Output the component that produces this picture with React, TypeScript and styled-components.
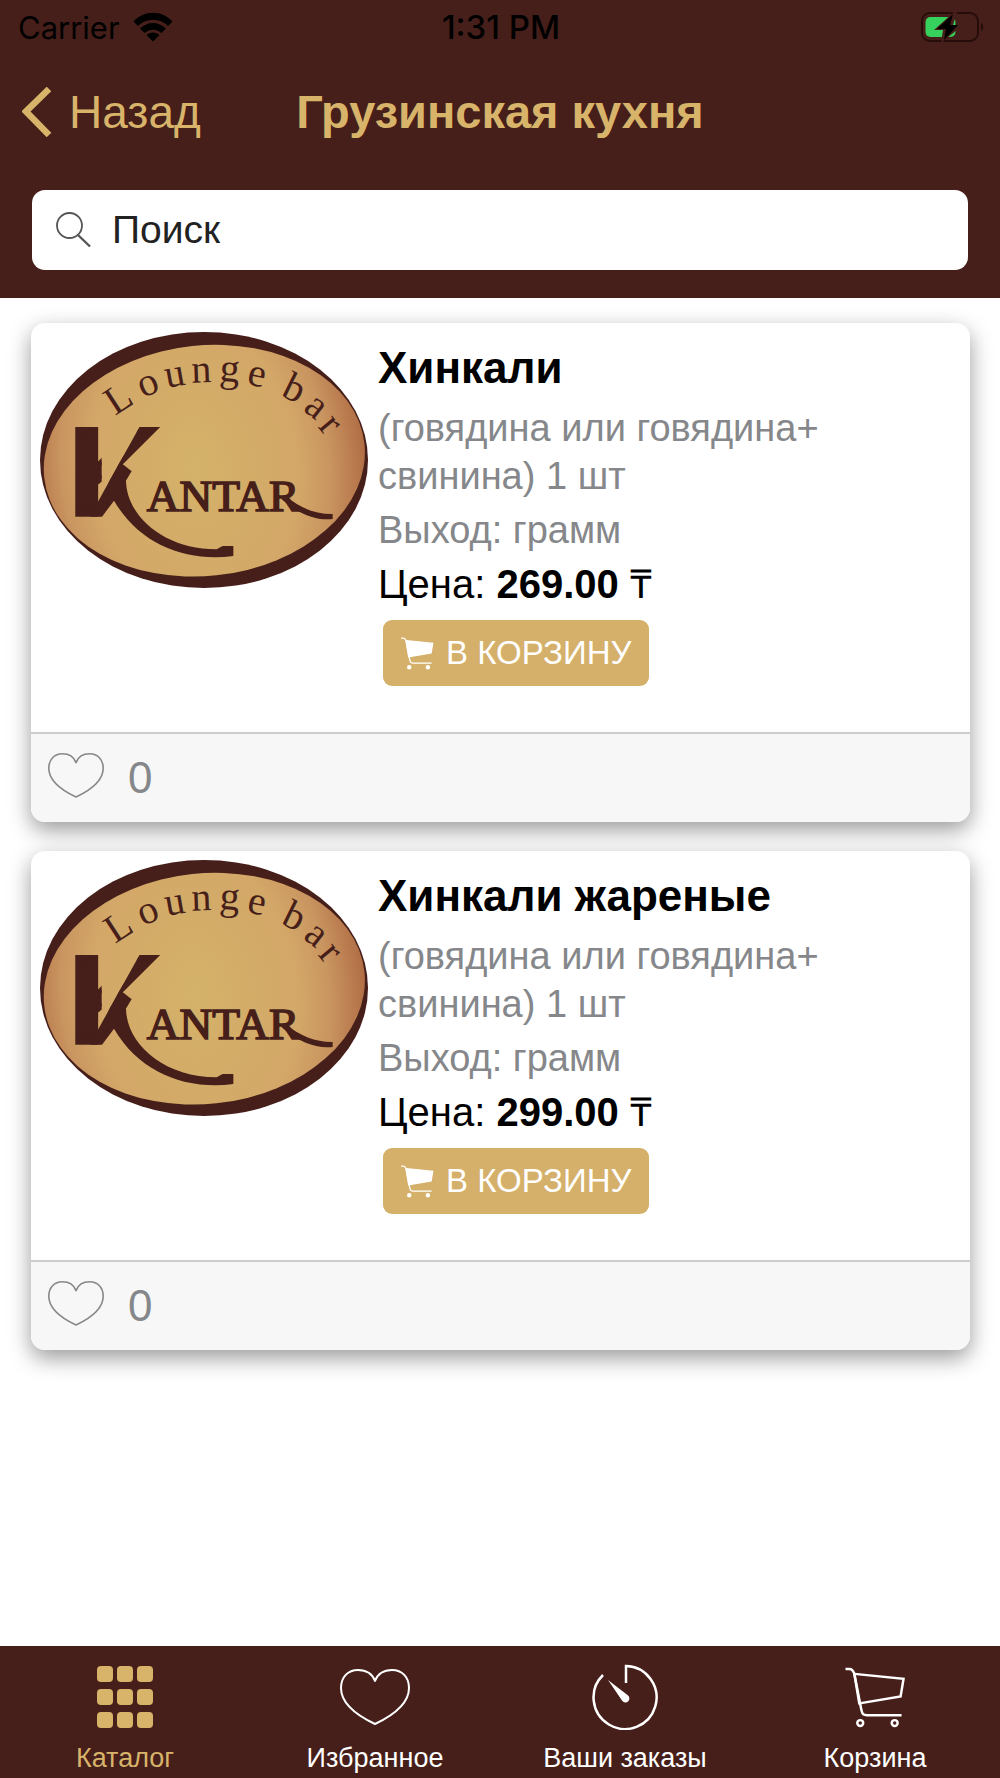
import React, { useState } from "react";
import styled, { createGlobalStyle } from "styled-components";

const brown = "#461f1a";
const gold = "#d8b36a";
const grey = "#85878a";

const GlobalStyle = createGlobalStyle`
  *, *::before, *::after { box-sizing: border-box; }
  body {
    margin: 0;
    background: #fff;
    font-family: "Liberation Sans", Arial, sans-serif;
  }
`;

const Screen = styled.div`
  display: flex;
  flex-direction: column;
  min-height: 100vh;
`;

const Header = styled.header`
  display: flex;
  flex-direction: column;
  padding-bottom: 28px;
  background: ${brown};
`;

const StatusBar = styled.div`
  display: grid;
  grid-template-columns: 1fr auto 1fr;
  align-items: center;
  height: 54px;
  padding: 0 16px 0 18px;
  font-family: Inter, sans-serif;
  font-size: 31px;
  color: #000;
`;

const Carrier = styled.div`
  display: flex;
  align-items: center;
  gap: 13px;
`;

const Clock = styled.time`
  font-size: 33px;
  font-weight: 500;
`;

const BatterySlot = styled.div`
  display: flex;
  justify-content: flex-end;
`;

const TitleBar = styled.div`
  display: grid;
  grid-template-columns: 1fr auto 1fr;
  align-items: center;
  height: 116px;
  padding: 0 22px;
  color: ${gold};
`;

const BackLink = styled.a`
  display: flex;
  align-items: center;
  gap: 14px;
  font-size: 46px;
  line-height: 52px;
  color: inherit;
  text-decoration: none;
`;

const PageTitle = styled.h1`
  margin: 0;
  font-size: 47px;
  line-height: 52px;
  font-weight: 700;
`;

const SearchBox = styled.label`
  display: flex;
  align-items: center;
  gap: 20px;
  height: 80px;
  margin: 20px 32px 0;
  padding: 0 24px;
  border-radius: 13px;
  background: #fff;
`;

const SearchInput = styled.input`
  flex: 1;
  min-width: 0;
  padding: 0;
  border: 0;
  outline: 0;
  background: transparent;
  font: 39px "Liberation Sans", Arial, sans-serif;
  color: #222;
  &::placeholder { color: #222; opacity: 1; }
`;

const List = styled.main`
  display: flex;
  flex: 1;
  flex-direction: column;
  gap: 29px;
  padding: 25px 30px 29px 31px;
`;

const Card = styled.article`
  border-radius: 14px;
  background: #fff;
  box-shadow: 0 8px 22px rgba(0, 0, 0, 0.4);
`;

const CardBody = styled.div`
  display: flex;
  align-items: flex-start;
  gap: 10px;
  min-height: 409px;
  padding: 9px;
`;

const Details = styled.div`
  display: flex;
  flex: 1;
  flex-direction: column;
  align-items: flex-start;
  padding-top: 12px;
`;

const DishName = styled.h2`
  margin: 0 0 12px;
  font-size: 44px;
  line-height: 48px;
  font-weight: 700;
  color: #000;
`;

const Note = styled.p`
  max-width: 480px;
  margin: 0 0 6px;
  font-size: 38px;
  line-height: 48px;
  color: ${grey};
`;

const Price = styled.p`
  margin: 0 0 12px;
  font-size: 40px;
  line-height: 48px;
  color: #000;
`;

const AddButton = styled.button`
  display: flex;
  align-items: center;
  gap: 12px;
  height: 66px;
  margin-left: 5px;
  padding: 0 18px;
  border: 0;
  border-radius: 9px;
  background: #d5b06a;
  font: 33px "Liberation Sans", Arial, sans-serif;
  color: #fff;
`;

const CardFooter = styled.footer`
  display: flex;
  align-items: center;
  height: 90px;
  padding: 0 17px;
  border-top: 2px solid #ccc;
  border-radius: 0 0 14px 14px;
  background: #f7f7f7;
`;

const LikeButton = styled.button`
  display: flex;
  align-items: center;
  gap: 24px;
  padding: 0;
  border: 0;
  background: transparent;
  font: 44px "Liberation Sans", Arial, sans-serif;
  color: ${grey};
  & > svg { margin-bottom: 5px; }
`;

const TabBar = styled.nav`
  display: grid;
  grid-template-columns: repeat(4, 1fr);
  height: 132px;
  background: ${brown};
`;

const Tab = styled.a<{ $active?: boolean }>`
  display: flex;
  flex-direction: column;
  align-items: center;
  gap: 12px;
  padding-top: 18px;
  font-size: 27px;
  line-height: 32px;
  color: ${(p) => (p.$active ? gold : "#fff")};
  text-decoration: none;
`;

const TabIcon = styled.span`
  display: flex;
  align-items: center;
  justify-content: center;
  height: 66px;
`;

const WifiIcon = () => (
  <svg width="40" height="30" viewBox="0 0 40 30" aria-hidden="true">
    <path d="M0.5 9.5C11-2.2 29-2.2 39.500 9.500L35 14C26.500 5.500 13.500 5.500 5 14Z" />
    <path d="M7 16.500C14.500 9 25.500 9 33 16.500L28.500 21C23.500 16.500 16.500 16.500 11.500 21Z" />
    <path d="M13.500 23C17 19.500 23 19.500 26.500 23L20 29.500Z" />
  </svg>
);

const BatteryIcon = () => (
  <svg width="63" height="32" viewBox="0 0 63 32" fill="none" aria-label="Battery charging">
    <rect x="1" y="2" width="56" height="28" rx="8" stroke="#260d0a" strokeWidth="2" />
    <path d="M60 12C63 13 63 19 60 20Z" fill="#260d0a" />
    <rect x="4.500" y="6" width="30" height="20" rx="5" fill="#35d15c" />
    <path d="M33 1 13 19H22L20 32 42 14H32L36 1Z" fill={brown} />
    <path d="M32 3 16 18H25L23 29 37 14H29Z" fill="#000" />
  </svg>
);

const ChevronIcon = () => (
  <svg width="33" height="50" viewBox="0 0 33 50" fill="none" aria-hidden="true">
    <path d="M27 2 4 24.500 27 48" stroke="currentColor" strokeWidth="6.500" />
  </svg>
);

const SearchIcon = () => (
  <svg width="36" height="36" viewBox="0 0 36 36" fill="none" stroke="#555" aria-hidden="true">
    <circle cx="13.500" cy="13.500" r="12.500" strokeWidth="1.800" />
    <path d="M22 23 34 34.500" strokeWidth="2.400" />
  </svg>
);

const HeartIcon = ({ width, stroke }: { width: number; stroke: number }) => (
  <svg width={width} height={width * 0.8} viewBox="0 0 70 56" fill="none" aria-hidden="true">
    <path
      d="M35 12C38 4 45 1 52 1C62 1 69 8 69 19C69 34 54 46 35 55C16 46 1 34 1 19C1 8 8 1 18 1C25 1 32 4 35 12Z"
      stroke="currentColor"
      strokeWidth={stroke}
      strokeLinejoin="round"
    />
  </svg>
);

const CartIcon = ({ size, filled }: { size: number; filled?: boolean }) => (
  <svg width={size} height={size} viewBox="0 0 61 62" fill="none" stroke="currentColor" strokeWidth="2.500" aria-hidden="true">
    <path d="M0 2H4C7 2 8 4 9 7L16 43C17 48 18 49 22 49H57" />
    <path d="M9 7 59 12 56 30 14 37Z" fill={filled ? "currentColor" : "none"} />
    <circle cx="15" cy="57" r="3" fill={filled ? "currentColor" : "none"} />
    <circle cx="50" cy="57" r="3" fill={filled ? "currentColor" : "none"} />
  </svg>
);

const GridIcon = () => (
  <svg width="56" height="62" viewBox="0 0 56 62" fill="currentColor" aria-hidden="true">
    {[0, 23, 46].map((y) =>
      [0, 20, 40].map((x) => <rect key={`${x}-${y}`} x={x} y={y} width="16" height="16" rx="4" />)
    )}
  </svg>
);

const TimerIcon = () => (
  <svg width="66" height="66" viewBox="0 0 66 66" fill="none" aria-hidden="true">
    <path d="M34 19V2A31.500 31.500 0 1 1 11 11" stroke="currentColor" strokeWidth="2.500" />
    <path d="M16 16 35.500 31A4 4 0 1 1 30 36.500Z" fill="currentColor" />
  </svg>
);

const KantarLogo = ({ id }: { id: string }) => (
  <svg width="328" height="256" viewBox="0 0 984 768" role="img" aria-label="Kantar lounge bar">
    <defs>
      <radialGradient id={`${id}-fill`} gradientUnits="userSpaceOnUse" cx="0" cy="0" r="490" gradientTransform="translate(465 400) scale(1.05 1.5)">
        <stop offset="0" stopColor="#d4b269" />
        <stop offset="0.6" stopColor="#d3a768" />
        <stop offset="0.78" stopColor="#c99560" />
        <stop offset="1" stopColor="#b06c44" />
      </radialGradient>
      <clipPath id={`${id}-arm`}>
        <path d="M0 200H185V489L298 286V200H420L362 286 258 444 225 500H185V600H0Z" />
      </clipPath>
    </defs>
    <ellipse cx="492" cy="384" rx="492" ry="384" fill={brown} />
    <ellipse cx="493" cy="386" rx="483" ry="346" transform="rotate(-6 493 386)" fill={`url(#${id}-fill)`} />
    <g fill={brown}>
      <text
        fontFamily="Liberation Serif, serif"
        fontSize="120"
        x="225 308 380 455 537 618 680 720 787 832"
        y="252 198 168 152 146 156 165 190 234 284"
        rotate="-33 -22 -10 -2 4 12 20 26 38 50"
      >
        Lounge bar
      </text>
      <text
        x="89"
        y="546"
        fontFamily="Liberation Sans, sans-serif"
        fontSize="366"
        fontWeight="700"
        stroke={brown}
        strokeWidth="16"
        clipPath={`url(#${id}-arm)`}
      >
        K
      </text>
      <path d="M178 502 240 390 275 418 258 444C258 550 370 652 530 652L548 642H580V672C440 690 300 640 222 506L186 554H150Z" />
      <text
        x="320"
        y="537"
        fontFamily="Liberation Serif, serif"
        fontSize="136"
        stroke={brown}
        strokeWidth="5"
      >
        ANTAR
      </text>
      <path d="M735 490C780 530 830 547 878 546V561C830 566 780 550 725 502Z" />
    </g>
  </svg>
);

type Dish = { id: string; name: string; note: string; price: string };

const dishes: Dish[] = [
  { id: "boiled", name: "Хинкали", note: "(говядина или говядина+ свинина) 1 шт", price: "269.00" },
  { id: "fried", name: "Хинкали жареные", note: "(говядина или говядина+ свинина) 1 шт", price: "299.00" },
];

const DishCard = ({ dish }: { dish: Dish }) => {
  const [likes, setLikes] = useState(0);
  return (
    <Card>
      <CardBody>
        <KantarLogo id={dish.id} />
        <Details>
          <DishName>{dish.name}</DishName>
          <Note>{dish.note}</Note>
          <Note>Выход: грамм</Note>
          <Price>
            Цена: <strong>{dish.price}</strong> ₸
          </Price>
          <AddButton type="button">
            <CartIcon size={33} filled />
            В КОРЗИНУ
          </AddButton>
        </Details>
      </CardBody>
      <CardFooter>
        <LikeButton type="button" aria-label="Нравится" onClick={() => setLikes(likes + 1)}>
          <HeartIcon width={56} stroke={2} />
          {likes}
        </LikeButton>
      </CardFooter>
    </Card>
  );
};

export default function App() {
  return (
    <>
      <GlobalStyle />
      <Screen>
        <Header>
          <StatusBar>
            <Carrier>
              Carrier
              <WifiIcon />
            </Carrier>
            <Clock>1:31 PM</Clock>
            <BatterySlot>
              <BatteryIcon />
            </BatterySlot>
          </StatusBar>
          <TitleBar>
            <BackLink href="#back">
              <ChevronIcon />
              Назад
            </BackLink>
            <PageTitle>Грузинская кухня</PageTitle>
          </TitleBar>
          <SearchBox>
            <SearchIcon />
            <SearchInput type="search" placeholder="Поиск" aria-label="Поиск" />
          </SearchBox>
        </Header>
        <List>
          {dishes.map((dish) => (
            <DishCard key={dish.id} dish={dish} />
          ))}
        </List>
        <TabBar>
          <Tab href="#catalog" $active aria-current="page">
            <TabIcon><GridIcon /></TabIcon>
            Каталог
          </Tab>
          <Tab href="#favourites">
            <TabIcon><HeartIcon width={70} stroke={2} /></TabIcon>
            Избранное
          </Tab>
          <Tab href="#orders">
            <TabIcon><TimerIcon /></TabIcon>
            Ваши заказы
          </Tab>
          <Tab href="#cart">
            <TabIcon><CartIcon size={61} /></TabIcon>
            Корзина
          </Tab>
        </TabBar>
      </Screen>
    </>
  );
}
